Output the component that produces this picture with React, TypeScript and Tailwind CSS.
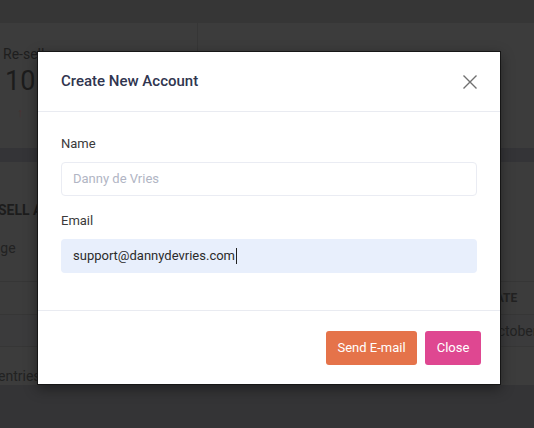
import React from "react";

export default function App() {
  return (
    <div
      className="relative w-[534px] h-[428px] overflow-hidden bg-[#343436]"
      style={{ fontFamily: "Roboto, 'Liberation Sans', sans-serif" }}
    >
      {/* Background page (dimmed) */}
      <div className="flex flex-col">
        <div className="h-[23px] bg-[#363636]" />
        <div className="h-[125px] bg-[#3c3c3c] flex">
          <div className="w-[198px] border-r border-[#363636] h-[30px]" />
        </div>
        <div className="h-[14px] bg-[#343437]" />
        <div className="h-[223px] bg-[#3c3c3c] flex flex-col">
          <div className="h-[120px] border-b border-[#363636]" />
          <div className="h-[33px] border-b border-[#363636]" />
          <div className="h-[32px] bg-[#3b3b3c] border-b border-[#363636]" />
        </div>
        <div className="flex-1 bg-[#343434]" />
      </div>

      {/* Background texts */}
      <div className="absolute left-[3px] top-[44px] text-[14px] text-[#1e1e1e]">Re-sell</div>
      <div className="absolute left-[5px] top-[68px] text-[27px] text-[#1c1c1c] leading-none">10</div>
      <div className="absolute left-[17px] top-[104px] text-[12px] text-[#4a3030]">↑</div>
      <div className="absolute left-[-2px] top-[200px] text-[14px] font-bold text-[#1c1c1c]">SELL ACCOUNTS</div>
      <div className="absolute left-[-16px] top-[238px] text-[14px] text-[#222]">Page</div>
      <div className="absolute left-[-2px] top-[366px] text-[14px] text-[#222]">entries</div>
      <div className="absolute left-[488px] top-[289px] text-[12px] font-bold text-[#222]">DATE</div>
      <div className="absolute left-[488px] top-[321px] text-[14px] text-[#222]">October</div>

      {/* Modal */}
      <div className="absolute left-[37px] top-[51px] w-[464px] h-[334px] bg-white border border-[#161616] flex flex-col shadow-[0_4px_12px_rgba(0,0,0,0.4)]">
        <div className="h-[60px] flex items-center justify-between pl-[23px] pr-[22px] border-b border-[#e9ebf1]">
          <div className="text-[15px] font-medium text-[#30354f]">Create New Account</div>
          <svg width="16" height="16" viewBox="0 0 16 16" fill="none">
            <path d="M1.5 1.5 L14.5 14.5 M14.5 1.5 L1.5 14.5" stroke="#707070" strokeWidth="1.4" />
          </svg>
        </div>
        <div className="flex-1 flex flex-col px-[23px] pt-[22px] border-b border-[#e9ebf1]">
          <div className="text-[13px] leading-[20px] text-[#3a3a3a]">Name</div>
          <div className="mt-[8px] h-[34px] rounded-[4px] border border-[#eaecf3] flex items-center px-[11px] text-[13px] text-[#b1b5c4]">
            Danny de Vries
          </div>
          <div className="mt-[15px] text-[13px] leading-[20px] text-[#3a3a3a]">Email</div>
          <div className="mt-[8px] h-[34px] rounded-[4px] bg-[#e8effc] flex items-center px-[12px] text-[13px] text-[#2b2b2b]">
            support@dannydevries.com
            <span className="inline-block w-[1px] h-[16px] bg-[#222] ml-[1px]" />
          </div>
        </div>
        <div className="h-[73px] flex items-center justify-end gap-[8px] pr-[19px]">
          <div className="h-[34px] w-[91px] rounded-[3px] bg-[#e5734a] text-white text-[13px] flex items-center justify-center">
            Send E-mail
          </div>
          <div className="h-[34px] w-[56px] rounded-[3px] bg-[#df4791] text-white text-[13px] flex items-center justify-center">
            Close
          </div>
        </div>
      </div>
    </div>
  );
}
